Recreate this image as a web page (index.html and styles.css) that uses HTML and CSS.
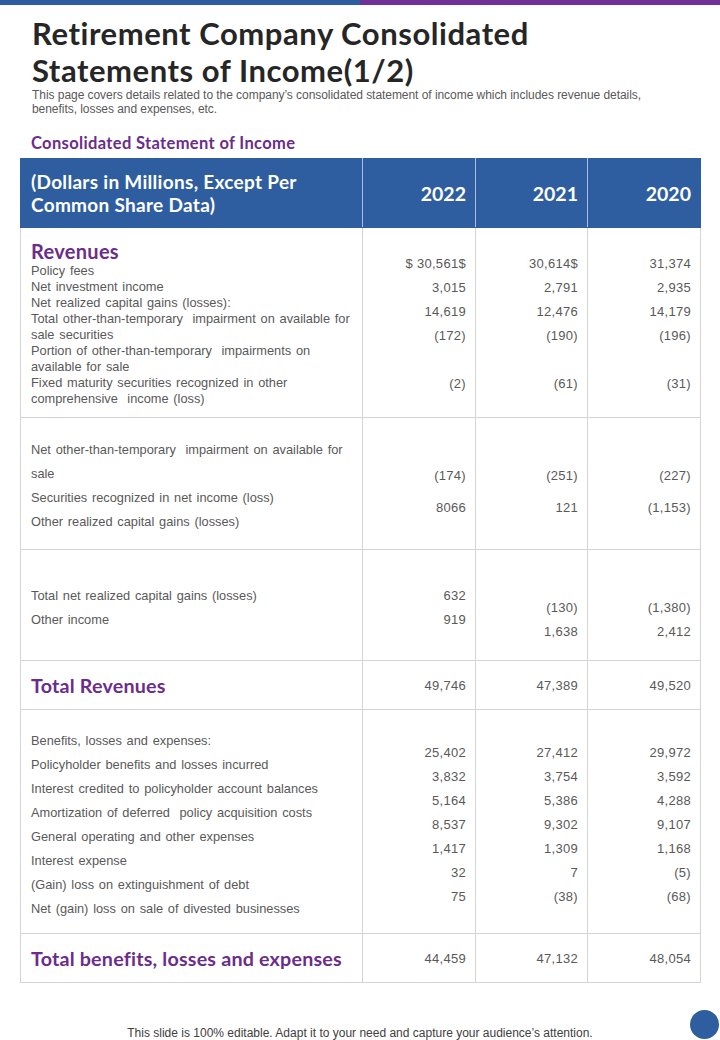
FILE: index.html
```html
<!DOCTYPE html>
<html>
<head>
<meta charset="utf-8">
<title>Retirement Company Consolidated Statements of Income(1/2)</title>
<link rel="stylesheet" href="styles.css">
</head>
<body>
<div class="topbar"><div class="bar bar-blue"></div><div class="bar bar-purple"></div></div>
<header class="head">
  <h1 class="title">Retirement Company Consolidated<br>Statements of Income(1/2)</h1>
  <p class="subtitle">This page covers details related to the company’s consolidated statement of income which includes revenue details,<br>benefits, losses and expenses, etc.</p>
</header>
<h2 class="section">Consolidated Statement of Income</h2>
<table class="fin">
  <colgroup><col class="c-label"><col class="c-num"><col class="c-num2"><col class="c-num"></colgroup>
  <thead>
    <tr>
      <th class="h-label">(Dollars in Millions, Except Per<br>Common Share Data)</th>
      <th class="h-year">2022</th>
      <th class="h-year">2021</th>
      <th class="h-year">2020</th>
    </tr>
  </thead>
  <tbody>
    <tr class="row row-rev">
      <td class="label">
        <div class="group-title">Revenues</div>
        <div class="lines tight">
          <span>Policy fees</span>
          <span>Net investment income</span>
          <span>Net realized capital gains (losses):</span>
          <span>Total other-than-temporary &nbsp;impairment on available for</span>
          <span>sale securities</span>
          <span>Portion of other-than-temporary &nbsp;impairments on</span>
          <span>available for sale</span>
          <span>Fixed maturity securities recognized in other</span>
          <span>comprehensive &nbsp;income (loss)</span>
        </div>
      </td>
      <td class="num"><div class="nums"><span>$ 30,561$</span><span>3,015</span><span>14,619</span><span>(172)</span><span>&nbsp;</span><span>(2)</span></div></td>
      <td class="num"><div class="nums"><span>30,614$</span><span>2,791</span><span>12,476</span><span>(190)</span><span>&nbsp;</span><span>(61)</span></div></td>
      <td class="num"><div class="nums"><span>31,374</span><span>2,935</span><span>14,179</span><span>(196)</span><span>&nbsp;</span><span>(31)</span></div></td>
    </tr>
    <tr class="row row-ott">
      <td class="label">
        <div class="lines">
          <span>Net other-than-temporary &nbsp;impairment on available for</span>
          <span>sale</span>
          <span>Securities recognized in net income (loss)</span>
          <span>Other realized capital gains (losses)</span>
        </div>
      </td>
      <td class="num"><div class="nums wide"><span>(174)</span><span>8066</span></div></td>
      <td class="num"><div class="nums wide"><span>(251)</span><span>121</span></div></td>
      <td class="num"><div class="nums wide"><span>(227)</span><span>(1,153)</span></div></td>
    </tr>
    <tr class="row row-net">
      <td class="label">
        <div class="lines">
          <span>Total net realized capital gains (losses)</span>
          <span>Other income</span>
        </div>
      </td>
      <td class="num"><div class="nums"><span>632</span><span>919</span></div></td>
      <td class="num"><div class="nums low"><span>(130)</span><span>1,638</span></div></td>
      <td class="num"><div class="nums low"><span>(1,380)</span><span>2,412</span></div></td>
    </tr>
    <tr class="row row-total">
      <td class="label total">Total Revenues</td>
      <td class="num">49,746</td>
      <td class="num">47,389</td>
      <td class="num">49,520</td>
    </tr>
    <tr class="row row-exp">
      <td class="label">
        <div class="lines">
          <span>Benefits, losses and expenses:</span>
          <span>Policyholder benefits and losses incurred</span>
          <span>Interest credited to policyholder account balances</span>
          <span>Amortization of deferred &nbsp;policy acquisition costs</span>
          <span>General operating and other expenses</span>
          <span>Interest expense</span>
          <span>(Gain) loss on extinguishment of debt</span>
          <span>Net (gain) loss on sale of divested businesses</span>
        </div>
      </td>
      <td class="num"><div class="nums"><span>25,402</span><span>3,832</span><span>5,164</span><span>8,537</span><span>1,417</span><span>32</span><span>75</span></div></td>
      <td class="num"><div class="nums"><span>27,412</span><span>3,754</span><span>5,386</span><span>9,302</span><span>1,309</span><span>7</span><span>(38)</span></div></td>
      <td class="num"><div class="nums"><span>29,972</span><span>3,592</span><span>4,288</span><span>9,107</span><span>1,168</span><span>(5)</span><span>(68)</span></div></td>
    </tr>
    <tr class="row row-total">
      <td class="label total">Total benefits, losses and expenses</td>
      <td class="num">44,459</td>
      <td class="num">47,132</td>
      <td class="num">48,054</td>
    </tr>
  </tbody>
</table>
<footer class="foot">This slide is 100% editable. Adapt it to your need and capture your audience’s attention.</footer>
<div class="dot"></div>
</body>
</html>
```
FILE: styles.css
```css
html, body {
  margin: 0;
  padding: 0;
}
body {
  width: 720px;
  height: 1040px;
  position: relative;
  overflow: hidden;
  background: #ffffff;
  font-family: "Liberation Sans", Arial, sans-serif;
  color: #595959;
}
.topbar {
  display: flex;
  height: 5px;
}
.bar { flex: 1; }
.bar-blue { background: #2e5e9f; }
.bar-purple { background: #70309a; }

.head {
  padding: 9.5px 0 0 32px;
}
.title {
  margin: 0;
  font-family: Lato, "Open Sans", sans-serif;
  font-weight: 700;
  font-size: 31px;
  letter-spacing: 0.55px;
  line-height: 37.4px;
  color: #262626;
}
.subtitle {
  margin: 0;
  font-size: 12px;
  line-height: 13.5px;
  letter-spacing: -0.05px;
  color: #595959;
}
.section {
  margin: 18px 0 0 31px;
  font-family: Lato, "Open Sans", sans-serif;
  font-weight: 700;
  font-size: 16.5px;
  letter-spacing: 0.35px;
  line-height: 18px;
  color: #6b2c8a;
}
.fin {
  margin: 6px 0 0 20px;
  width: 681px;
  border-collapse: collapse;
  table-layout: fixed;
}
.c-label { width: 342px; }
.c-num { width: 113px; }
.c-num2 { width: 112px; }

.fin th {
  background: #2e5e9f;
  color: #ffffff;
  font-family: Lato, "Open Sans", sans-serif;
  font-weight: 700;
  border: 1px solid #2e5e9f;
  border-right-color: #a9c0e0;
  height: 68px;
  padding: 0;
}
.fin th:last-child { border-right-color: #2e5e9f; }
.h-label {
  text-align: left;
  font-size: 19px;
  letter-spacing: 0.3px;
  line-height: 23px;
  padding-left: 10px !important;
}
.h-year {
  text-align: right;
  font-size: 19.5px;
  padding-right: 9px !important;
}

.fin td {
  border: 1px solid #d4d4d4;
  vertical-align: top;
  padding: 0;
  font-size: 12px;
}
.label {
  padding-left: 10px !important;
}
.num {
  text-align: right;
  padding-right: 9px !important;
}
.lines span, .nums span {
  display: block;
  white-space: nowrap;
}
.lines {
  line-height: 24px;
  font-size: 12.8px;
  word-spacing: 1.2px;
}
.lines.tight {
  line-height: 16px;
}
.nums {
  line-height: 24px;
  font-size: 13px;
  letter-spacing: 0.3px;
}
.group-title {
  font-family: Lato, "Open Sans", sans-serif;
  font-weight: 700;
  font-size: 20px;
  letter-spacing: 0.3px;
  line-height: 24px;
  color: #6b2c8a;
}

/* row paddings */
.row-rev .label { padding-top: 11px; padding-bottom: 10px; }
.row-rev .nums { padding-top: 24px; }

.row-ott .label { padding-top: 20px; padding-bottom: 15px; }
.row-ott .nums { padding-top: 42px; line-height: 32px; }

.row-net .label { padding-top: 34px; padding-bottom: 28px; }
.row-net .nums { padding-top: 34px; }
.row-net .nums.low { padding-top: 46px; }

.row-exp .label { padding-top: 19px; padding-bottom: 12px; }
.row-exp .nums { padding-top: 31px; }

.row-total td {
  vertical-align: middle;
  height: 48px;
  font-size: 13px;
  letter-spacing: 0.3px;
}
.label.total {
  font-family: Lato, "Open Sans", sans-serif;
  font-weight: 700;
  font-size: 19.7px;
  letter-spacing: 0.2px;
  color: #6b2c8a;
}

.foot {
  margin-top: 43px;
  text-align: center;
  font-size: 12px;
  line-height: 14px;
  color: #404040;
}
.dot {
  position: absolute;
  left: 690px;
  top: 1010px;
  width: 29px;
  height: 29px;
  border-radius: 50%;
  background: #2e5e9f;
}
```
